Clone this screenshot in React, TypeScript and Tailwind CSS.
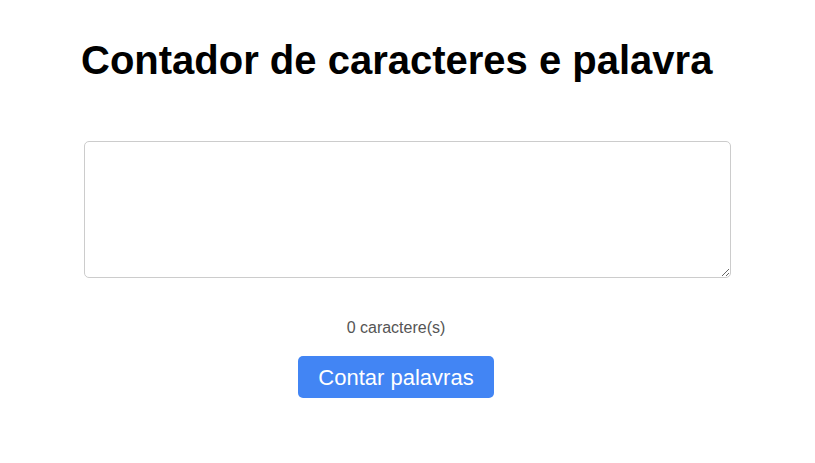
import { useState } from "react";

export default function App() {
	const [text, setText] = useState("");

	return (
		<div className="min-h-screen bg-white font-['Liberation_Sans',Arial,sans-serif]">
			<div className="ml-[81px] w-[630px] pt-[37px]">
				<h1 className="whitespace-nowrap text-[40px] font-bold leading-[46px] text-black">Contador de caracteres e palavra</h1>
				<textarea
					value={text}
					onChange={e => setText(e.target.value)}
					className="mt-[58px] ml-[3px] block h-[137px] w-[647px] resize-y rounded-[5px] border border-[#cccccc] p-2 text-base outline-none"
				/>
				<div className="mt-[40px] flex flex-col items-center">
					<p className="text-base leading-5 text-[#555555]">{text.length} caractere(s)</p>
					<button className="mt-[18px] h-[42px] w-[196px] rounded-[5px] bg-[#4285f4] text-[22px] text-white">Contar palavras</button>
				</div>
			</div>
		</div>
	);
}
